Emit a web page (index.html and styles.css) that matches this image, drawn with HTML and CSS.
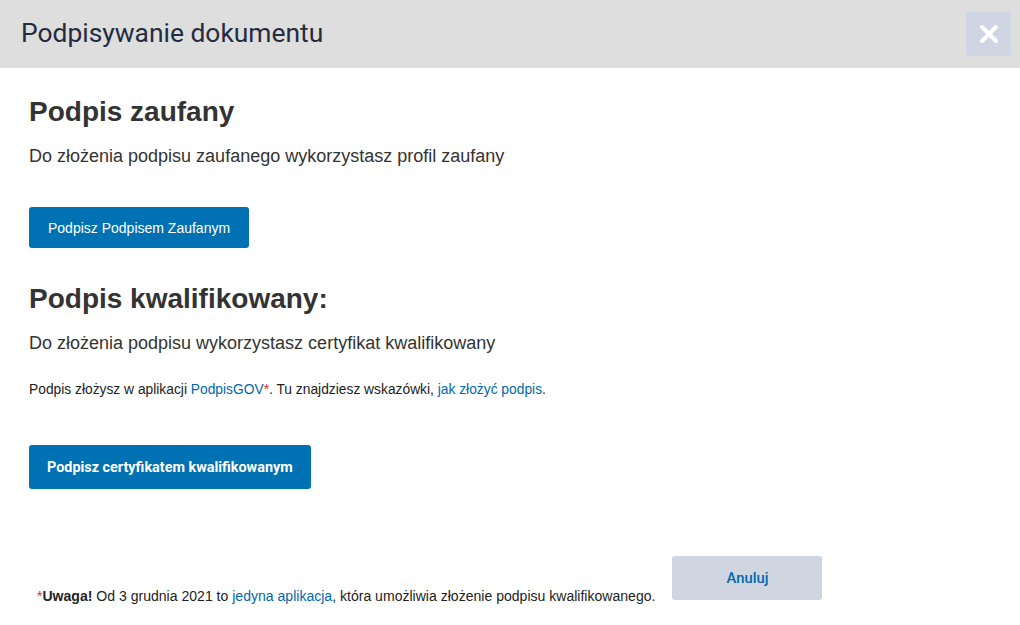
FILE: index.html
```html
<!DOCTYPE html>
<html lang="pl">
<head>
<meta charset="utf-8">
<link rel="stylesheet" href="styles.css">
</head>
<body>
<div class="modal">
  <header class="modal-header">
    <h1 class="modal-title">Podpisywanie dokumentu</h1>
    <button class="close-btn" aria-label="Zamknij">
      <svg width="20" height="20" viewBox="0 0 20 20"><path d="M3 3 L17 17 M17 3 L3 17" stroke="#fff" stroke-width="4" stroke-linecap="round"/></svg>
    </button>
  </header>
  <main class="modal-body">
    <section class="section">
      <h2 class="heading">Podpis zaufany</h2>
      <p class="lead">Do złożenia podpisu zaufanego wykorzystasz profil zaufany</p>
      <button class="btn btn-trusted">Podpisz Podpisem Zaufanym</button>
    </section>
    <section class="section">
      <h2 class="heading">Podpis kwalifikowany:</h2>
      <p class="lead">Do złożenia podpisu wykorzystasz certyfikat kwalifikowany</p>
      <p class="small">Podpis złożysz w aplikacji <a href="#">PodpisGOV</a><span class="star">*</span>. Tu znajdziesz wskazówki, <a href="#">jak złożyć podpis</a>.</p>
      <button class="btn btn-qualified">Podpisz certyfikatem kwalifikowanym</button>
    </section>
  </main>
  <footer class="modal-footer">
    <p class="note"><span class="star">*</span><strong>Uwaga!</strong> Od 3 grudnia 2021 to <a href="#">jedyna aplikacja</a>, która umożliwia złożenie podpisu kwalifikowanego.</p>
    <button class="btn btn-cancel">Anuluj</button>
  </footer>
</div>
</body>
</html>
```
FILE: styles.css
```css
* { box-sizing: border-box; }
html, body { margin: 0; padding: 0; background: #fff; }
body { width: 1020px; height: 625px; overflow: hidden; font-family: "Liberation Sans", Arial, sans-serif; color: #333; }
.modal { display: flex; flex-direction: column; height: 625px; }
.modal-header {
  height: 68px; background: #dedede; display: flex; align-items: center;
  justify-content: space-between; padding: 0 9px 2px 21px;
}
.modal-title {
  margin: 0; font-family: Roboto, sans-serif; font-weight: 400; font-size: 26.4px;
  color: #262c40; letter-spacing: 0;
}
.close-btn {
  width: 45px; height: 44px; border: 0; border-radius: 3px; background: #cfd5e3;
  display: flex; align-items: center; justify-content: center; padding: 0; margin-top: 1px;
}
.modal-body { padding: 28px 29px 0; }
.section { display: flex; flex-direction: column; align-items: flex-start; }
.heading { margin: 0; font-size: 28px; font-weight: 700; color: #333; line-height: 32px; }
.lead { margin: 17px 0 0; font-size: 18px; line-height: 22px; color: #333; }
.small { margin: 28px 0 0; font-size: 13.8px; line-height: 16px; color: #222; }
a { color: #0068ad; text-decoration: none; }
.star { color: #e4251f; }
.btn { border: 0; border-radius: 3px; cursor: pointer; }
.btn-trusted {
  margin-top: 40px; height: 41px; padding: 0 19px; background: #0071b3; color: #fff;
  font-family: "Liberation Sans", Arial, sans-serif; font-size: 14px;
}
.section + .section { margin-top: 35px; }
.btn-qualified {
  margin-top: 47px; height: 44px; padding: 0 18px; background: #0071b3; color: #fff;
  font-family: Roboto, sans-serif; font-weight: 700; font-size: 14.4px;
}
.modal-footer {
  margin-top: auto; display: flex; align-items: flex-end; gap: 17px;
  padding: 0 0 25px 37px;
}
.note { margin: 0 0 -4px; font-size: 14.05px; line-height: 16px; color: #222; }
.note strong { color: #222; }
.btn-cancel {
  width: 150px; height: 44px; background: #d0d5e2; color: #0068ad;
  font-family: Roboto, sans-serif; font-weight: 500; font-size: 14.8px;
}
```
